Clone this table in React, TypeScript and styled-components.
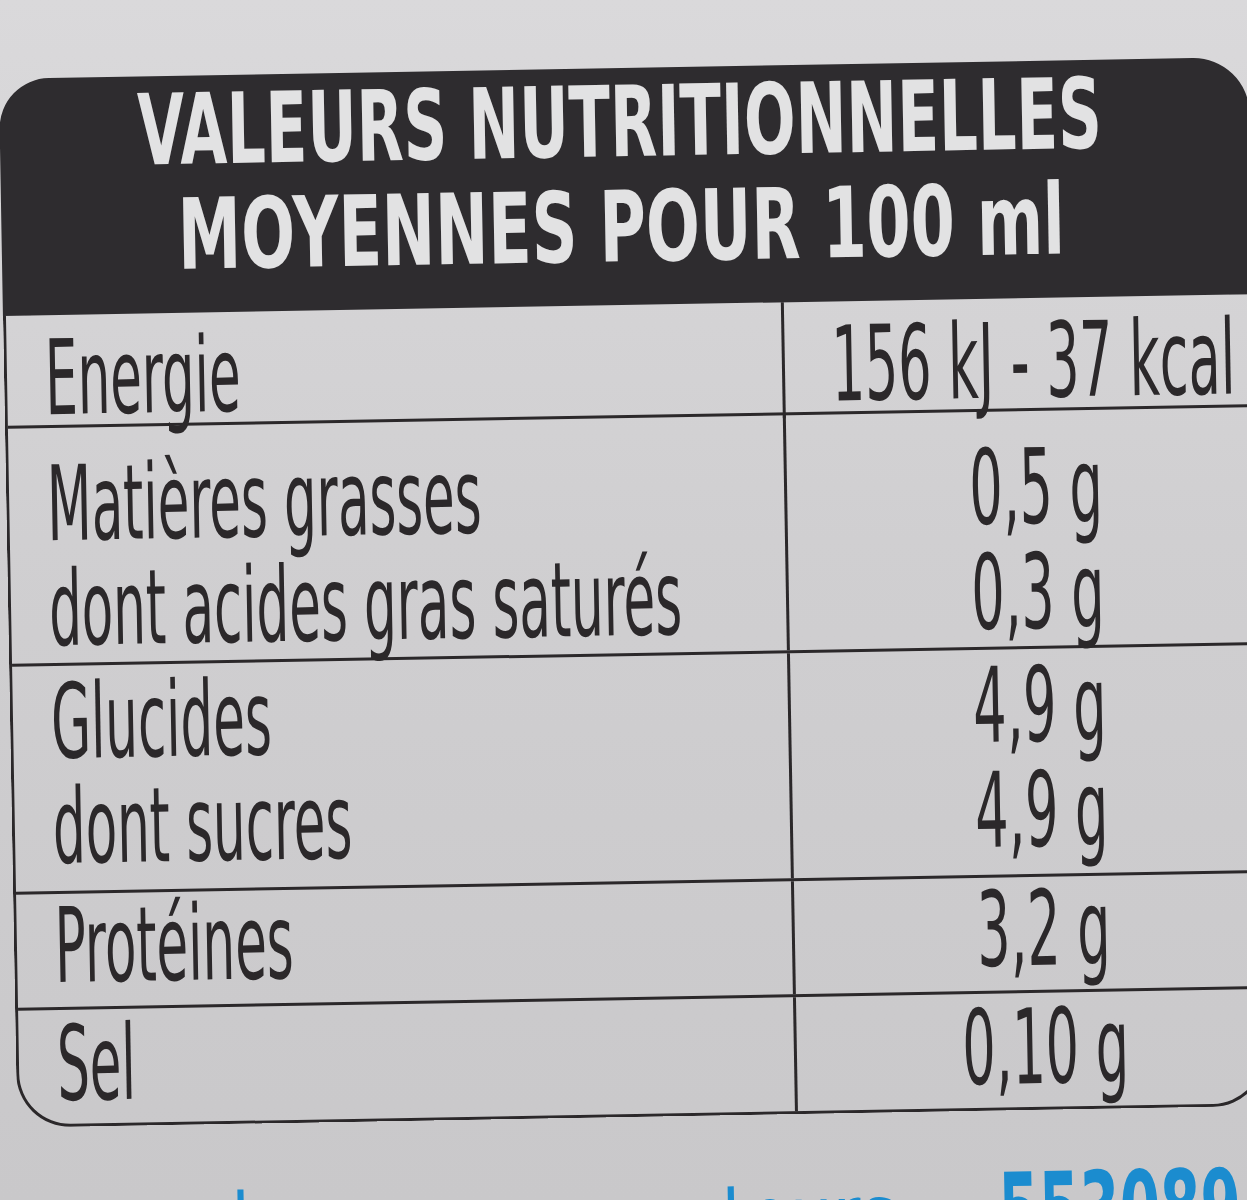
import React from "react";
import styled, { createGlobalStyle } from "styled-components";

// condensed look of the printed label: condensed face squeezed a bit more
const LABEL_SCALE = 0.55;
const VALUE_SCALE = 0.56;

const GlobalStyle = createGlobalStyle`
  html, body {
    margin: 0;
    padding: 0;
    overflow: hidden;
  }
  body {
    font-family: "DejaVu Sans Condensed", "Liberation Sans", Arial, sans-serif;
    background: #d3d2d4;
  }
`;

interface Row {
  labels: string[];
  values: string[];
  height: number;
  pad: number;
}

const rows: Row[] = [
  { labels: ["Energie"], values: ["156 kJ - 37 kcal"], height: 113, pad: 11 },
  {
    labels: ["Matières grasses", "dont acides gras saturés"],
    values: ["0,5 g", "0,3 g"],
    height: 238,
    pad: 24,
  },
  { labels: ["Glucides", "dont sucres"], values: ["4,9 g", "4,9 g"], height: 228, pad: 4 },
  { labels: ["Protéines"], values: ["3,2 g"], height: 116, pad: 0 },
  { labels: ["Sel"], values: ["0,10 g"], height: 114, pad: 2 },
];

const App: React.FC = () => {
  return (
    <Page>
      <GlobalStyle />
      <Sheet>
        <Label>
          <Header>
            <HeadLine $scale={0.69}>VALEURS NUTRITIONNELLES</HeadLine>
            <HeadLine $scale={0.72}>MOYENNES POUR 100 ml</HeadLine>
          </Header>
          <Table>
            {rows.map((r, i) => (
              <TableRow key={i} $height={r.height} $last={i === rows.length - 1}>
                <NameCell $pad={r.pad}>
                  {r.labels.map((l) => (
                    <NameText key={l}>{l}</NameText>
                  ))}
                </NameCell>
                <ValueCell $pad={r.pad}>
                  {r.values.map((v, j) => (
                    <ValueText key={j}>{v}</ValueText>
                  ))}
                </ValueCell>
              </TableRow>
            ))}
          </Table>
        </Label>
        <Footer>
          <FooterText>service consommateurs :</FooterText>
          <FooterCode>553089</FooterCode>
        </Footer>
      </Sheet>
    </Page>
  );
};

export default App;

const Page = styled.div`
  width: 1247px;
  height: 1200px;
  overflow: hidden;
  background: linear-gradient(180deg, #dad9db 0%, #d0cfd1 45%, #c9c8ca 100%);
`;

const Sheet = styled.div`
  width: 1250px;
  padding: 68px 0 0 8px;
  transform: rotate(-1deg);
  transform-origin: 630px 600px;
`;

const Label = styled.section`
  display: flex;
  flex-direction: column;
  width: 1250px;
`;

const Header = styled.header`
  display: flex;
  flex-direction: column;
  align-items: center;
  height: 237px;
  box-sizing: border-box;
  padding: 2px 10px 0 0;
  background: #2e2c2f;
  border-radius: 50px 56px 0 0;
  color: #e2e2e3;
`;

const HeadLine = styled.div<{ $scale: number }>`
  font-size: 98px;
  line-height: 105px;
  font-weight: 700;
  white-space: nowrap;
  transform: scaleX(${(p) => p.$scale});
  transform-origin: center;
`;

const Table = styled.div`
  border: 3px solid #2b282a;
  border-top: none;
  border-radius: 0 0 54px 54px;
  color: #2b282a;
`;

const TableRow = styled.div<{ $height: number; $last: boolean }>`
  display: grid;
  grid-template-columns: 778px minmax(0, 1fr);
  box-sizing: border-box;
  height: ${(p) => p.$height}px;
  border-bottom: ${(p) => (p.$last ? "none" : "3px solid #2b282a")};
`;

const NameCell = styled.div<{ $pad: number }>`
  box-sizing: border-box;
  min-width: 0;
  padding: ${(p) => p.$pad}px 0 0 38px;
  border-right: 3px solid #2b282a;
`;

const ValueCell = styled.div<{ $pad: number }>`
  display: flex;
  flex-direction: column;
  align-items: center;
  min-width: 0;
  box-sizing: border-box;
  padding: ${(p) => p.$pad}px 10px 0 41px;
`;

const NameText = styled.div`
  font-size: 104px;
  line-height: 105px;
  white-space: nowrap;
  transform: scaleX(${LABEL_SCALE});
  transform-origin: left center;
`;

const ValueText = styled.div`
  font-size: 104px;
  line-height: 105px;
  white-space: nowrap;
  transform: scaleX(${VALUE_SCALE});
  transform-origin: center;
`;

const Footer = styled.div`
  display: grid;
  grid-template-columns: 912px auto;
  align-items: baseline;
  padding: 46px 0 0 68px;
  color: #1b8ccf;
  white-space: nowrap;
`;

const FooterText = styled.span`
  display: inline-block;
  font-size: 94px;
  line-height: 110px;
  transform: scaleX(0.8);
  transform-origin: left center;
`;

const FooterCode = styled.span`
  display: inline-block;
  font-size: 104px;
  line-height: 110px;
  font-weight: 700;
  transform: scaleX(0.62);
  transform-origin: left center;
`;
